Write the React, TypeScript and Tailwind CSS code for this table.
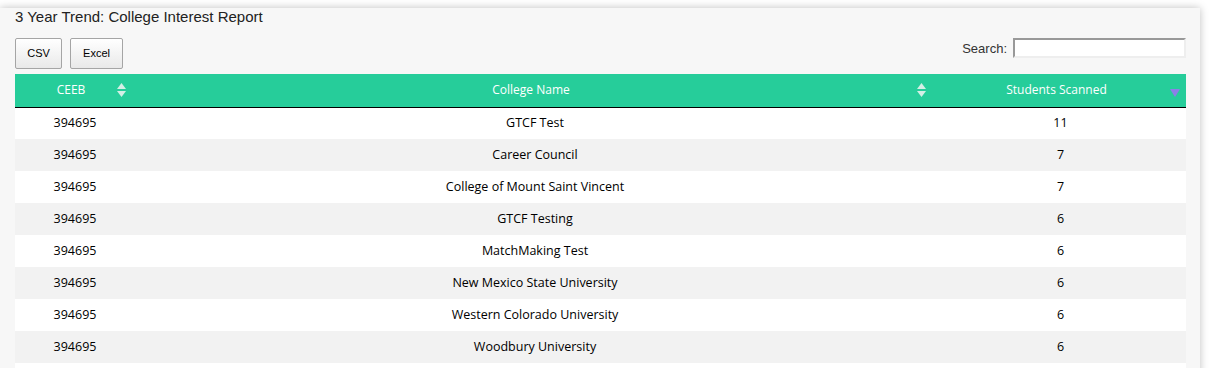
import React from "react";

const rows: [string, string, string][] = [
  ["394695", "GTCF Test", "11"],
  ["394695", "Career Council", "7"],
  ["394695", "College of Mount Saint Vincent", "7"],
  ["394695", "GTCF Testing", "6"],
  ["394695", "MatchMaking Test", "6"],
  ["394695", "New Mexico State University", "6"],
  ["394695", "Western Colorado University", "6"],
  ["394695", "Woodbury University", "6"],
];

function SortBoth() {
  return (
    <svg width="9" height="14" viewBox="0 0 9 14" className="absolute right-[9px] top-1/2 -translate-y-1/2">
      <polygon points="4.5,0 9,6 0,6" fill="#d4efe6" />
      <polygon points="0,8 9,8 4.5,14" fill="#d4efe6" />
    </svg>
  );
}

function SortDesc() {
  return (
    <svg width="10" height="8" viewBox="0 0 10 8" className="absolute right-[6px] top-[15px]">
      <polygon points="0,0 10,0 5,8" fill="#8c7fe8" />
    </svg>
  );
}

export default function App() {
  return (
    <div className="bg-white w-[1211px] h-[368px] overflow-hidden pt-[8px]">
      <div className="w-[1200px] bg-[#f7f7f7] shadow-[0_0_8px_rgba(0,0,0,0.25)] pl-[15px] pr-[14px] pb-10 font-['Liberation_Sans',Arial,sans-serif]">
        <div className="pt-[1px] h-[30px] text-[15px] leading-[16px] text-[#222]">3 Year Trend: College Interest Report</div>
        <div className="flex items-start justify-between h-[36px]">
          <div className="flex gap-[8px]">
            <button className="w-[47px] h-[31px] rounded-[2px] border border-[#a5a5a5] bg-gradient-to-b from-white to-[#e9e9e9] text-[11px] text-black">CSV</button>
            <button className="w-[53px] h-[31px] rounded-[2px] border border-[#a5a5a5] bg-gradient-to-b from-white to-[#e9e9e9] text-[11px] text-black">Excel</button>
          </div>
          <div className="flex items-center gap-[6px] text-[13px] text-[#333]">
            <span className="mt-[1px]">Search:</span>
            <input className="w-[173px] h-[20px] bg-white border-2 border-t-[#999] border-l-[#999] border-r-[#eee] border-b-[#eee] outline-none" />
          </div>
        </div>
        <table className="w-[1171px] border-collapse font-['Open_Sans','Noto_Sans',sans-serif] text-[12.5px]">
          <thead>
            <tr className="bg-[#26cd9a] text-white border-b border-black text-[12px]">
              <th className="relative w-[120px] h-[33px] font-normal pl-[10px] pr-[18px] text-center">CEEB<SortBoth /></th>
              <th className="relative w-[800px] h-[33px] font-normal pl-[10px] pr-[18px] text-center">College Name<SortBoth /></th>
              <th className="relative h-[33px] font-normal pl-[10px] pr-[18px] text-center">Students Scanned<SortDesc /></th>
            </tr>
          </thead>
          <tbody>
            {rows.map((r, i) => (
              <tr key={i} className={i % 2 === 0 ? "bg-white" : "bg-[#f2f2f2]"}>
                <td className="h-[32px] px-[10px] text-center text-black">{r[0]}</td>
                <td className="h-[32px] px-[10px] text-center text-black">{r[1]}</td>
                <td className="h-[32px] px-[10px] text-center text-black">{r[2]}</td>
              </tr>
            ))}
            <tr className="bg-white">
              <td className="h-[32px]" />
              <td className="h-[32px]" />
              <td className="h-[32px]" />
            </tr>
          </tbody>
        </table>
      </div>
    </div>
  );
}
